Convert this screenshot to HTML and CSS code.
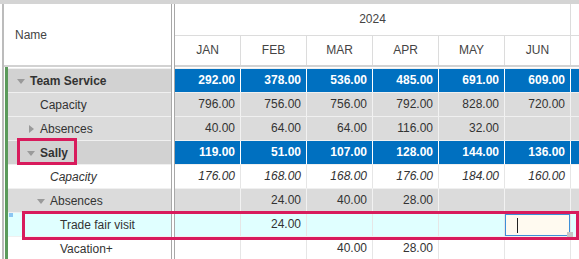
FILE: index.html
```html
<!DOCTYPE html>
<html lang="en">
<head>
  <meta charset="UTF-8">
  <title>Capacity Planning</title>
  <link rel="stylesheet" href="styles.css">
</head>
<body>
  <div class="grid">
    <div class="pane names">
      <div class="head name-head">Name</div>
      <div class="rows">
        <div class="name group lvl0"><span class="toggle open"></span>Team Service</div>
        <div class="name shade lvl1"><span class="toggle"></span>Capacity</div>
        <div class="name shade lvl1"><span class="toggle closed"></span>Absences</div>
        <div class="name group lvl1"><span class="toggle open"></span>Sally</div>
        <div class="name lvl2 italic"><span class="toggle"></span>Capacity</div>
        <div class="name shade lvl2"><span class="toggle open"></span>Absences</div>
        <div class="name active lvl3"><span class="drop-mark"></span><span class="toggle"></span>Trade fair visit</div>
        <div class="name lvl3"><span class="toggle"></span>Vacation+</div>
      </div>
    </div>

    <div class="pane data">
      <div class="head">
        <div class="year-row"><div class="year">2024</div></div>
        <div class="month-row">
          <div class="month">JAN</div>
          <div class="month">FEB</div>
          <div class="month">MAR</div>
          <div class="month">APR</div>
          <div class="month">MAY</div>
          <div class="month">JUN</div>
          <div class="month"></div>
        </div>
      </div>
      <div class="rows">
        <div class="row total">
          <div class="cell">292.00</div><div class="cell">378.00</div><div class="cell">536.00</div>
          <div class="cell">485.00</div><div class="cell">691.00</div><div class="cell">609.00</div><div class="cell"></div>
        </div>
        <div class="row shade">
          <div class="cell">796.00</div><div class="cell">756.00</div><div class="cell">756.00</div>
          <div class="cell">792.00</div><div class="cell">828.00</div><div class="cell">720.00</div><div class="cell"></div>
        </div>
        <div class="row shade">
          <div class="cell">40.00</div><div class="cell">64.00</div><div class="cell">64.00</div>
          <div class="cell">116.00</div><div class="cell">32.00</div><div class="cell"></div><div class="cell"></div>
        </div>
        <div class="row total">
          <div class="cell">119.00</div><div class="cell">51.00</div><div class="cell">107.00</div>
          <div class="cell">128.00</div><div class="cell">144.00</div><div class="cell">136.00</div><div class="cell"></div>
        </div>
        <div class="row italic">
          <div class="cell">176.00</div><div class="cell">168.00</div><div class="cell">168.00</div>
          <div class="cell">176.00</div><div class="cell">184.00</div><div class="cell">160.00</div><div class="cell"></div>
        </div>
        <div class="row shade">
          <div class="cell"></div><div class="cell">24.00</div><div class="cell">40.00</div>
          <div class="cell">28.00</div><div class="cell"></div><div class="cell"></div><div class="cell"></div>
        </div>
        <div class="row active">
          <div class="cell"></div><div class="cell">24.00</div><div class="cell"></div>
          <div class="cell"></div><div class="cell"></div>
          <div class="cell editing"><div class="editor"><span class="caret"></span></div><span class="fill-handle"></span></div>
          <div class="cell"></div>
        </div>
        <div class="row">
          <div class="cell"></div><div class="cell"></div><div class="cell">40.00</div>
          <div class="cell">28.00</div><div class="cell"></div><div class="cell"></div><div class="cell"></div>
        </div>
      </div>
    </div>
  </div>

  <!-- highlight callouts -->
  <div class="callout callout-sally"></div>
  <div class="callout callout-trade"></div>
</body>
</html>
```

FILE: styles.css
```css
:root {
  --text: #333;
  --head-text: #444;
  --line: #dcdcdc;
  --splitter: #a8a8a8;
  --shade: #dbdbdb;
  --group: #d2d2d2;
  --total: #0070c0;
  --active: #e0ffff;
  --tree: #5b9a5b;
  --callout: #d81b5c;
}

body {
  margin: 0;
  font-family: "Liberation Sans", Arial, sans-serif;
  font-size: 12px;
  color: var(--text);
  background: #fff;
}

.grid {
  display: flex;
  height: 259px;
  box-sizing: border-box;
  border-top: 4px solid #d4d4d4;
  overflow: hidden;
}

.pane {
  display: flex;
  flex-direction: column;
}

.names {
  flex: none;
  width: 167px;
  margin-left: 2px;
  border-left: 2px solid #bcbcbc;
  border-right: 1px solid var(--splitter);
}

.data {
  flex: 1;
  min-width: 0;
  margin-left: 2px;
  border-left: 1px solid var(--splitter);
  overflow: hidden;
}

.head {
  flex: none;
  height: 61px;
  border-bottom: 2px solid #d2d2d2;
  background: #fff;
  color: var(--head-text);
}

.name-head {
  display: flex;
  align-items: center;
  padding-left: 11px;
}

.rows {
  flex: 1;
  padding-top: 1px;
}

.names .rows {
  margin-left: 1px;
  border-left: 3px solid var(--tree);
}

/* tree column */
.name {
  position: relative;
  display: flex;
  align-items: center;
  height: 23px;
  border-top: 1px solid #f0f0f0;
  background: #fff;
  white-space: nowrap;
}

.name.shade { background: var(--shade); }
.name.group { background: var(--group); font-weight: bold; }
.name.active { background: var(--active); }

.lvl0 { padding-left: 8px; }
.lvl1 { padding-left: 18px; }
.lvl2 { padding-left: 28px; }
.lvl3 { padding-left: 38px; }

.italic { font-style: italic; }

.toggle {
  flex: none;
  width: 14px;
  height: 8px;
  position: relative;
}

.toggle.open::before {
  content: "";
  position: absolute;
  left: 1px;
  top: 2px;
  border-left: 4px solid transparent;
  border-right: 4px solid transparent;
  border-top: 5px solid #9a9a9a;
}

.toggle.closed::before {
  content: "";
  position: absolute;
  left: 3px;
  top: 0;
  border-top: 4px solid transparent;
  border-bottom: 4px solid transparent;
  border-left: 5px solid #9a9a9a;
}

.drop-mark {
  position: absolute;
  left: 1px;
  top: 0;
  width: 4px;
  height: 4px;
  background: #8cc6f2;
}

/* header */
.year-row {
  display: flex;
  height: 31px;
  border-bottom: 1px solid var(--line);
}

.year {
  width: 396px;
  flex: none;
  box-sizing: border-box;
  border-right: 1px solid var(--line);
  text-align: center;
  line-height: 31px;
}

.month-row {
  display: flex;
  height: 29px;
}

.month {
  width: 66px;
  flex: none;
  box-sizing: border-box;
  border-right: 1px solid var(--line);
  text-align: center;
  line-height: 29px;
}

/* data cells */
.row {
  display: flex;
  height: 23px;
  border-top: 1px solid #f0f0f0;
  background: #fff;
}

.cell {
  width: 66px;
  flex: none;
  box-sizing: border-box;
  padding-right: 5px;
  border-right: 1px solid #e6e6e6;
  text-align: right;
  line-height: 23px;
}

.row.shade { background: var(--shade); }
.row.shade .cell { border-right-color: #f2f2f2; }

.row.total { background: var(--total); color: #fff; font-weight: bold; }
.row.total .cell { border-right-color: #fff; }

.row.active { background: var(--active); }

.cell.editing {
  position: relative;
  padding: 1px 0 0;
}

.editor {
  display: flex;
  align-items: center;
  height: 100%;
  box-sizing: border-box;
  padding-left: 11px;
  border: 1px solid #3d8fd8;
  background: #fffaf0;
}

.caret {
  width: 1px;
  height: 15px;
  background: #222;
}

.fill-handle {
  position: absolute;
  left: 62px;
  top: 19px;
  width: 6px;
  height: 6px;
  background: #c6c6c6;
}

/* red annotation boxes */
.callout {
  position: absolute;
  box-sizing: border-box;
  border: 3px solid var(--callout);
}

.callout-sally {
  left: 17px;
  top: 138px;
  width: 60px;
  height: 27px;
}

.callout-trade {
  left: 22px;
  top: 211px;
  width: 557px;
  height: 29px;
}
```
